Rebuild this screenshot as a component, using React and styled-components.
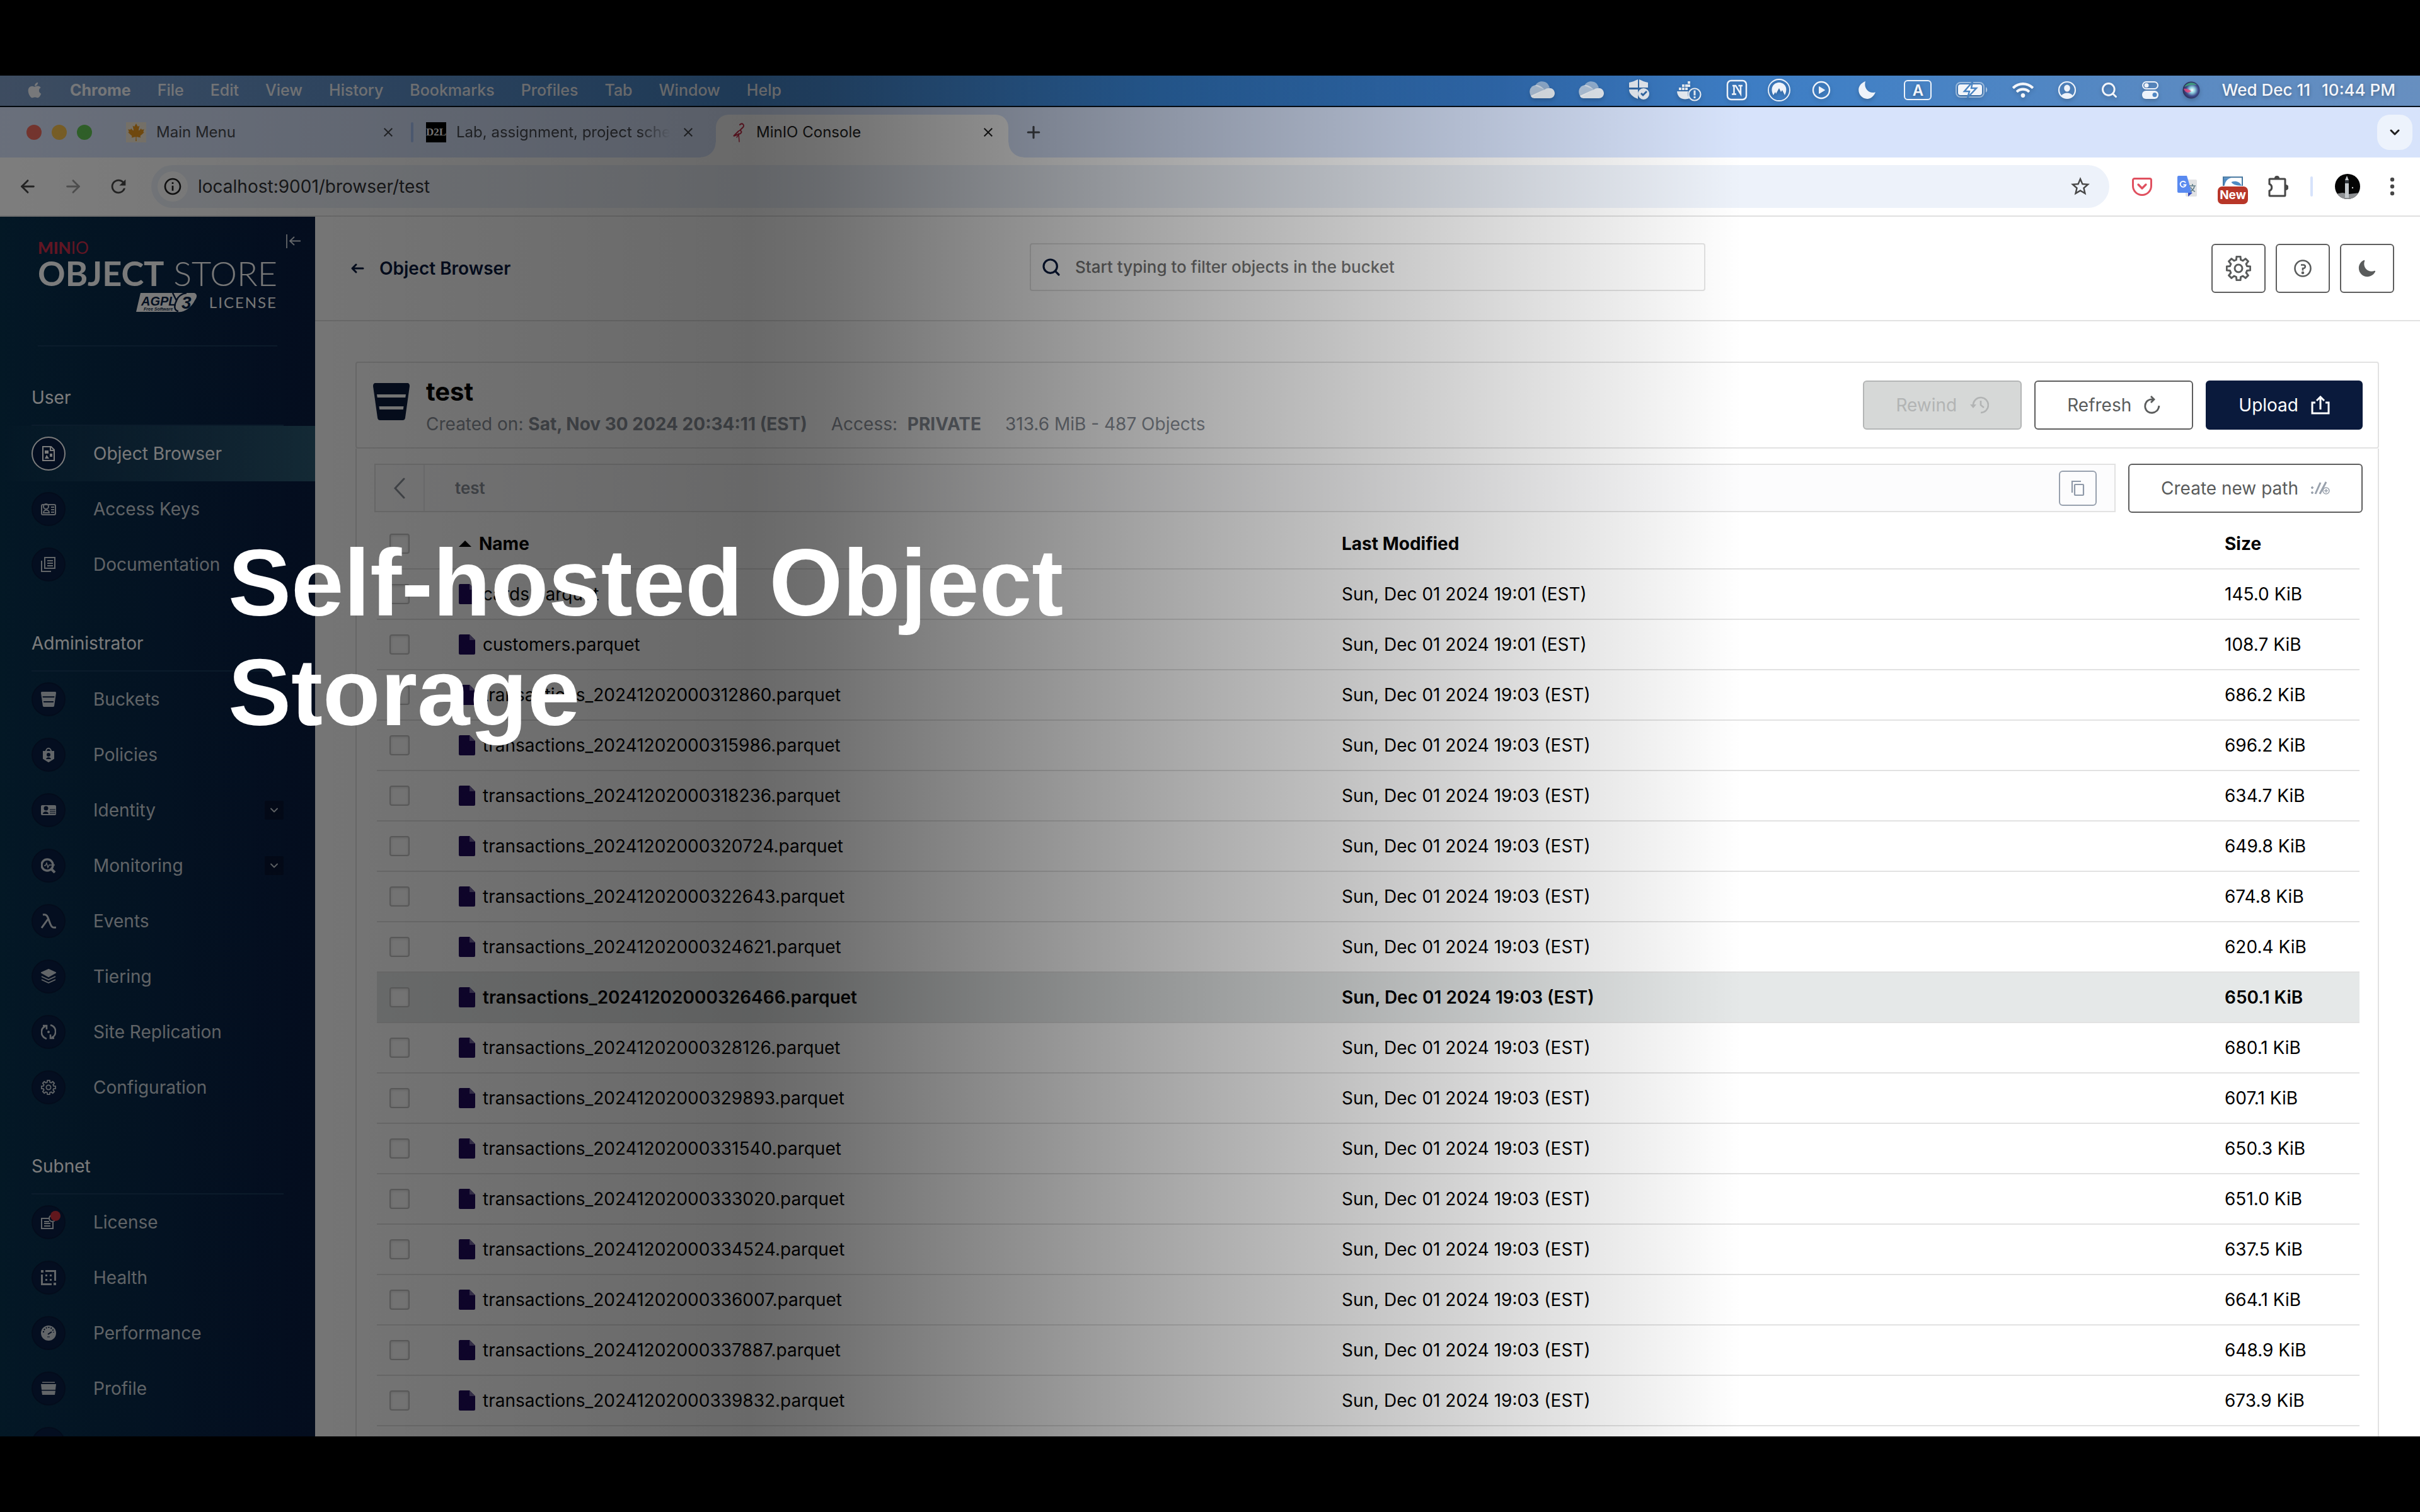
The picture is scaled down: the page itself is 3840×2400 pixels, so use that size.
import React from "react";
import styled, { createGlobalStyle, css } from "styled-components";
import { FaApple, FaCanadianMapleLeaf, FaWifi } from "react-icons/fa";
import { MdStarBorder, MdClose, MdRefresh, MdOutlineInfo } from "react-icons/md";
import { IoMoon } from "react-icons/io5";
import { ArrowLeft, ArrowRight, ChevronDown, Plus, Search } from "lucide-react";

const GlobalStyle = createGlobalStyle`
  *, *::before, *::after { box-sizing: border-box; }
  body {
    margin: 0;
    background: #000;
    font-family: Inter, "Liberation Sans", sans-serif;
    font-size: 28px;
    line-height: 36px;
  }
  button, input { font: inherit; color: inherit; }
  button { border: 0; padding: 0; margin: 0; background: none; }
  a { color: inherit; text-decoration: none; }
  svg { display: block; flex: none; }
`;

/* ---------- Slide frame ---------- */

const Stage = styled.main`
  min-height: 100vh;
  display: flex;
  flex-direction: column;
  justify-content: center;
`;

const Frame = styled.div`
  position: relative;
  width: 100%;
  aspect-ratio: 16 / 9;
  overflow: hidden;
  display: flex;
  flex-direction: column;
  background: #fff;
`;

const Overlay = styled.div`
  position: absolute;
  inset: 0;
  padding: 718px 362px 0;
  pointer-events: none;
  background: linear-gradient(
    90deg,
    rgba(0, 0, 0, 0.51) 0%,
    rgba(0, 0, 0, 0.54) 13%,
    rgba(0, 0, 0, 0.59) 31%,
    rgba(0, 0, 0, 0.56) 34%,
    rgba(0, 0, 0, 0.36) 47%,
    rgba(0, 0, 0, 0.29) 52%,
    rgba(0, 0, 0, 0.09) 66%,
    rgba(0, 0, 0, 0) 72%
  );
`;

const Headline = styled.h1`
  margin: 0;
  max-width: 1500px;
  color: #fff;
  font-family: "Liberation Sans", Arial, sans-serif;
  font-size: 150px;
  line-height: 174px;
  font-weight: 700;
`;

/* ---------- macOS menu bar ---------- */

const MenuBar = styled.header`
  flex: none;
  height: 50px;
  padding: 0 39px 2px 41px;
  display: flex;
  align-items: center;
  justify-content: space-between;
  color: #f4f6fa;
  font-size: 26px;
  border-bottom: 2px solid #05101c;
  background: linear-gradient(90deg, #7d9bc4 0%, #6a97cd 10%, #4a8bd0 30%, #3580d0 48%, #3474bf 62%, #4180c5 76%, #5a8ac2 90%, #678fc0 100%);
  text-shadow: 0 2px 6px rgba(0, 0, 0, 0.3);
`;

const MenuGroup = styled.nav`
  display: flex;
  align-items: center;
  gap: 42px;
  font-size: 25px;
`;

const MenuItem = styled.button`
  font-weight: ${(p) => (p.$strong ? 700 : 500)};
`;

const StatusGroup = styled.div`
  display: flex;
  align-items: center;
  gap: 34px;
`;

const StatusIcons = styled.div`
  display: flex;
  align-items: center;
  gap: 38px;
  svg { overflow: visible; filter: drop-shadow(0 3px 3px rgba(0, 0, 0, 0.2)); }
`;

const Clock = styled.time`
  display: flex;
  gap: 18px;
  font-weight: 500;
`;

/* ---------- Browser chrome ---------- */

const TabStrip = styled.div`
  flex: none;
  height: 80px;
  padding: 12px 12px 0 0;
  display: flex;
  align-items: flex-start;
  background: #d7e3fb;
  color: #474a50;
  font-size: 24px;
`;

const Lights = styled.div`
  width: 188px;
  height: 56px;
  padding-left: 42px;
  display: flex;
  align-items: center;
  gap: 16px;
`;

const Light = styled.span`
  width: 24px;
  height: 24px;
  border-radius: 50%;
  background: ${(p) => p.$color};
`;

const Tab = styled.div`
  position: relative;
  width: ${(p) => p.$width}px;
  height: 56px;
  padding: 0 8px 0 20px;
  display: flex;
  align-items: center;
  gap: 16px;
  ${(p) =>
    p.$divider &&
    css`
      padding: 0 28px 0 12px;
      &::after {
        content: "";
        position: absolute;
        right: 0;
        width: 4px;
        height: 32px;
        border-radius: 2px;
        background: #a8c4f5;
      }
    `}
  ${(p) =>
    p.$active &&
    css`
      height: 68px;
      margin-left: 24px;
      padding: 0 20px 12px 24px;
      color: #1f1f1f;
      background: #fff;
      border-radius: 20px 20px 0 0;
      &::before,
      &::after {
        content: "";
        position: absolute;
        bottom: 0;
        width: 24px;
        height: 24px;
      }
      &::before {
        right: 100%;
        background: radial-gradient(circle at 0 0, transparent 23px, #fff 24px);
      }
      &::after {
        left: 100%;
        background: radial-gradient(circle at 100% 0, transparent 23px, #fff 24px);
      }
    `}
`;

const TabTitle = styled.button`
  flex: 1;
  min-width: 0;
  text-align: left;
  white-space: nowrap;
  overflow: hidden;
  ${(p) =>
    p.$fade &&
    css`
      mask-image: linear-gradient(90deg, #000 85%, transparent 100%);
    `}
`;

const IconButton = styled.button`
  display: flex;
  align-items: center;
  justify-content: center;
  width: ${(p) => p.$size || 32}px;
  height: ${(p) => p.$size || 32}px;
  color: ${(p) => p.$color || "inherit"};
`;

const NewTab = styled(IconButton)`
  width: 80px;
  height: 56px;
  margin-right: auto;
`;

const TabSearch = styled(IconButton)`
  width: 56px;
  height: 56px;
  border-radius: 20px;
  background: #edf3fc;
  color: #1f1f1f;
`;

const Toolbar = styled.div`
  flex: none;
  height: 94px;
  padding: 12px 28px 12px 28px;
  display: flex;
  align-items: center;
  background: #fff;
  border-bottom: 2px solid #e0e0e0;
  color: #474747;
`;

const NavButtons = styled.div`
  width: 212px;
  display: flex;
  gap: 40px;
`;

const AddressBar = styled.label`
  flex: 1;
  height: 68px;
  padding: 0 30px 0 10px;
  display: flex;
  align-items: center;
  gap: 16px;
  border-radius: 34px;
  background: #edf2fa;
`;

const SiteInfo = styled(IconButton)`
  width: 48px;
  height: 48px;
  border-radius: 50%;
  background: #fff;
  color: #1f1f1f;
`;

const AddressInput = styled.input`
  flex: 1;
  border: 0;
  padding: 0;
  outline: 0;
  background: none;
  color: #303134;
  font-size: 28px;
`;

const ToolbarEnd = styled.div`
  padding-left: 36px;
  display: flex;
  align-items: center;
  gap: 35px;
`;

const Extensions = styled.div`
  display: flex;
  align-items: center;
  gap: 40px;
`;

const Separator = styled.span`
  width: 4px;
  height: 32px;
  border-radius: 2px;
  background: #d7e3fb;
`;

const NewExtension = styled.button`
  position: relative;
  display: flex;
  align-items: flex-start;
  width: 32px;
  height: 32px;
`;

const NewBadge = styled.span`
  position: absolute;
  top: 16px;
  left: -8px;
  width: 48px;
  height: 28px;
  border-radius: 7px;
  background: #b83628;
  color: #fff;
  font-size: 19px;
  line-height: 28px;
  font-weight: 700;
  text-align: center;
`;

/* ---------- Console ---------- */

const Console = styled.div`
  flex: 1;
  min-height: 0;
  display: flex;
`;

const Sidebar = styled.aside`
  width: 500px;
  flex: none;
  background: linear-gradient(90deg, #07304c 0%, #081c42 100%);
  color: #fff;
`;

const Brand = styled.div`
  position: relative;
  height: 206px;
  margin: 0 60px;
  padding-top: 38px;
  border-bottom: 2px solid #17395a;
  font-family: Lato, "Open Sans", sans-serif;
`;

const BrandName = styled.div`
  height: 22px;
  color: #c72c48;
  font-size: 26px;
  line-height: 22px;
  font-weight: 900;
  span { font-weight: 400; }
`;

const ProductName = styled.div`
  height: 60px;
  display: flex;
  justify-content: space-between;
  font-size: 54px;
  line-height: 60px;
  font-weight: 300;
  white-space: nowrap;
  b { font-weight: 700; }
`;

const LicenseLine = styled.div`
  display: flex;
  justify-content: flex-end;
  align-items: center;
  gap: 18px;
  font-size: 24px;
  line-height: 32px;
  letter-spacing: 2px;
`;

const CollapseButton = styled.button`
  position: absolute;
  top: 28px;
  right: -38px;
  color: #d8dde4;
`;

const NavHeading = styled.h2`
  margin: 0 50px;
  height: 126px;
  padding-top: 63px;
  border-bottom: 2px solid #17395a;
  font-size: 28px;
  line-height: 36px;
  font-weight: 400;
`;

const NavList = styled.ul`
  margin: 0;
  padding: 0;
  list-style: none;
`;

const NavRow = styled.li`
  height: 88px;
  padding: 0 50px;
  display: flex;
  align-items: center;
  justify-content: space-between;
  color: ${(p) => (p.$active ? "#fff" : "#c9d0d6")};
  background: ${(p) => (p.$active ? "linear-gradient(90deg, rgba(43, 92, 120, 0) 0%, #2a5a73 100%)" : "none")};
`;

const NavLink = styled.a`
  display: flex;
  align-items: center;
  gap: 44px;
`;

const NavIcon = styled.span`
  position: relative;
  width: 54px;
  height: 54px;
  display: flex;
  align-items: center;
  justify-content: center;
  border-radius: 50%;
  border: 2px solid ${(p) => (p.$active ? "#fff" : "#071838")};
  background: #081c42;
`;

const NavDot = styled.i`
  position: absolute;
  top: 7px;
  right: 6px;
  width: 16px;
  height: 16px;
  border-radius: 50%;
  background: #c8303c;
`;

const Expander = styled(IconButton)`
  width: 30px;
  height: 30px;
  border-radius: 2px;
  background: #071431;
`;

const Content = styled.div`
  flex: 1;
  min-width: 0;
  background: #fff;
`;

const PageHeader = styled.div`
  height: 166px;
  padding: 0 41px 0 56px;
  display: grid;
  grid-template-columns: 1078px 1072px 1fr;
  align-items: center;
  border-bottom: 2px solid #e2e2e2;
`;

const BackLink = styled.a`
  display: flex;
  align-items: center;
  gap: 24px;
  color: #07193e;
  font-weight: 600;
`;

const SearchBox = styled.label`
  height: 76px;
  margin-bottom: 4px;
  padding: 0 16px;
  display: flex;
  align-items: center;
  gap: 22px;
  border: 2px solid #e2e2e2;
  border-radius: 4px;
  color: #07193e;
`;

const SearchInput = styled.input`
  flex: 1;
  padding: 0;
  border: 0;
  outline: 0;
  background: none;
  font-size: 26px;
  font-weight: 500;
  &::placeholder { color: #747474; opacity: 1; }
`;

const HeaderActions = styled.div`
  display: flex;
  justify-content: flex-end;
  gap: 16px;
`;

const SquareButton = styled.button`
  width: 86px;
  height: 78px;
  display: flex;
  align-items: center;
  justify-content: center;
  border: 2px solid #5e5e5e;
  border-radius: 6px;
  color: #5a5c5c;
`;

const Page = styled.section`
  padding: 64px 65px 0 64px;
`;

const BucketHeader = styled.div`
  height: 138px;
  padding: 0 24px 0 26px;
  display: flex;
  align-items: center;
  border: 2px solid #e2e2e2;
  border-radius: 4px;
`;

const BucketMark = styled.span`
  align-self: flex-start;
  padding-top: 32px;
  color: #0a1a3c;
`;

const BucketInfo = styled.div`
  flex: 1;
  padding-left: 26px;
`;

const BucketName = styled.h2`
  margin: 0;
  font-size: 40px;
  line-height: 60px;
  font-weight: 700;
  color: #000;
`;

const BucketMeta = styled.p`
  margin: 0;
  display: flex;
  gap: 38px;
  color: #8a9099;
  line-height: 42px;
  white-space: pre;
  b { font-weight: 700; }
`;

const Actions = styled.div`
  display: flex;
  gap: 20px;
`;

const Button = styled.button`
  height: 78px;
  padding: 0 50px;
  display: flex;
  align-items: center;
  gap: 20px;
  border: 2px solid #5e5e5e;
  border-radius: 6px;
  color: #5a5c5c;
  white-space: nowrap;
  ${(p) =>
    p.$primary &&
    css`
      color: #fff;
      border-color: #0a1a3c;
      background: #0a1a3c;
    `}
  &:disabled {
    color: #b2b4b4;
    border-color: #b4b6b6;
    background: #d6d8d7;
  }
`;

const Browser = styled.div`
  padding: 24px 24px 40px 28px;
  border: solid #e2e2e2;
  border-width: 0 2px;
`;

const PathRow = styled.div`
  display: flex;
  gap: 20px;
`;

const PathBar = styled.nav`
  flex: 1;
  height: 77px;
  padding-right: 28px;
  display: flex;
  align-items: center;
  border: 2px solid #e2e2e2;
  background: #fcfcfd;
  color: #8a9099;
  font-size: 26px;
  font-weight: 600;
`;

const PathBack = styled(IconButton)`
  width: 78px;
  height: 73px;
  border-right: 2px solid #e8e8ea;
  margin-right: 48px;
`;

const CopyButton = styled(IconButton)`
  width: 60px;
  height: 56px;
  margin-left: auto;
  border: 2px solid #98a1ae;
  border-radius: 6px;
  color: #8f99a8;
`;

const ObjectTable = styled.table`
  width: calc(100% - 9px);
  margin: 10px 5px 0 4px;
  table-layout: fixed;
  border-collapse: separate;
  border-spacing: 0;
  color: #000;
  text-align: left;
`;

const SelectColumn = styled.col`
  width: 130px;
`;

const SizeColumn = styled.col`
  width: 214px;
`;

const Cell = styled.td`
  height: 80px;
  padding: 0 0 0 ${(p) => (p.$select ? 20 : 0)}px;
  border-bottom: 2px solid #e2e2e2;
`;

const Row = styled.tr`
  font-weight: ${(p) => (p.$hover ? 600 : 400)};
  background: ${(p) => (p.$hover ? "#e5e8e8" : "none")};
`;

const HeadCell = styled(Cell)`
  font-weight: 700;
`;

const CellInner = styled.div`
  display: flex;
  align-items: center;
  gap: 12px;
`;

const Checkbox = styled.input.attrs({ type: "checkbox" })`
  appearance: none;
  display: block;
  width: 32px;
  height: 32px;
  margin: 0;
  border: 2px solid #c3c3c3;
  border-radius: 4px;
  background: #fff;
  box-shadow: inset 0 1px 4px rgba(0, 0, 0, 0.15);
`;

/* ---------- Icons ---------- */

const Cloud = () => (
  <svg width="40" height="28" viewBox="0 0 40 28" fill="#fff">
    <path opacity=".5" d="M9 7C12 1 18-1 24 1c4 1 6 4 8 9l-8 3z" />
    <path opacity=".65" d="M2 23C-2 16 1 7 10 6c5-.5 8 2 14 7L4 25z" />
    <path opacity=".9" d="M2 23l22-10c8-5 16-1 16 6 0 5-4 8-8 8H9c-4 0-6-1-7-4z" />
  </svg>
);

const Shield = () => (
  <svg width="36" height="36" viewBox="0 0 36 36" fill="#e9eef5">
    <path d="M2 6C8 5 11 3 16 1v13H2zM18 1c5 2 8 4 14 5v8H18zM2 17h14v15C8 29 2 24 2 17z" />
    <path fillRule="evenodd" d="M25 15a9 9 0 100 18 9 9 0 000-18zm-5 9l2-2 2 2 5-5 2 2-7 7z" />
  </svg>
);

const Docker = () => (
  <svg width="46" height="34" viewBox="0 0 46 34" fill="#e9eef5">
    <path d="M21 3h4v4h-4zM12 8h4v4h-4zM17 8h4v4h-4zM21 8h4v4h-4zM7 13h4v4H7zM12 13h4v4h-4zM17 13h4v4h-4zM4 19h18c-2 4-1 8 2 11-7 3-19 2-20-11z" />
    <circle cx="32" cy="24" r="9.500" fill="none" stroke="#e9eef5" strokeWidth="2.200" />
    <path d="M30.500 17.500h3v8h-3zM30.500 27h3v3h-3z" />
  </svg>
);

const Notion = () => (
  <svg width="30" height="32" viewBox="0 0 30 32" fill="none" stroke="#eef3fa">
    <rect x="0" y="1" width="30" height="30" rx="6" strokeWidth="2.500" />
    <path d="M8 9h5l8 13V9M17.500 9H24M10.500 9.500V22M7 22.500h7" strokeWidth="2.500" />
  </svg>
);

const Peaks = () => (
  <svg width="28" height="36" viewBox="0 0 28 36">
    <circle cx="14" cy="18" r="17" fill="none" stroke="#eef3fa" strokeWidth="1.800" />
    <path d="M5 26C-1 15 5 6 14 6s15 9 9 20l-4-8-2 3-3-6-5 9-1-3z" fill="#eef3fa" />
  </svg>
);

const Play = () => (
  <svg width="30" height="30" viewBox="0 0 30 30">
    <circle cx="15" cy="15" r="13" fill="none" stroke="#eef3fa" strokeWidth="2.400" />
    <path d="M11.500 9.500v11l9-5.500z" fill="#eef3fa" stroke="#eef3fa" strokeLinejoin="round" />
  </svg>
);

const MenuMoon = () => (
  <svg width="40" height="28" viewBox="0 0 40 28" fill="#eef3fa">
    <path d="M17 0c-3 10 4 20 16 17.500C30 24 25 28 20 28 6 28-1 7 17 0z" />
  </svg>
);

const InputSourceBox = styled.span`
  width: 44px;
  height: 32px;
  border: 2px solid #eef3fa;
  border-radius: 6px;
  font-weight: 600;
  font-size: 24px;
  line-height: 29px;
  text-align: center;
`;

const Battery = () => (
  <svg width="52" height="26" viewBox="0 0 52 26">
    <rect x="1" y="1" width="44" height="23" rx="7" fill="none" stroke="#eef3fa" strokeOpacity=".5" strokeWidth="2" />
    <rect x="4" y="4" width="38" height="17" rx="4" fill="#f2f5fa" />
    <path d="M48 8c3 2 3 7 0 9z" fill="#eef3fa" opacity=".6" />
    <path d="M27 0L14 15h8l-3 10L33 10h-8z" fill="#fff" stroke="#4a84c3" strokeWidth="2.500" />
  </svg>
);

const UserCircle = () => (
  <svg width="30" height="30" viewBox="0 0 30 30" fill="#eef3fa">
    <circle cx="15" cy="15" r="13" fill="none" stroke="#eef3fa" strokeWidth="2.200" />
    <ellipse cx="15" cy="12" rx="4.800" ry="5.600" />
    <path d="M6 24c3-6 15-6 18 0-5 5-13 5-18 0z" />
  </svg>
);

const Toggles = () => (
  <svg width="26" height="28" viewBox="0 0 26 28">
    <rect x="1" y="1" width="24" height="11" rx="5.500" fill="none" stroke="#eef3fa" strokeWidth="2" />
    <circle cx="7" cy="6.500" r="3.500" fill="#eef3fa" />
    <rect y="15" width="26" height="13" rx="6" fill="#eef3fa" />
    <circle cx="20" cy="21.500" r="3.500" fill="#4f86c3" />
  </svg>
);

const Assistant = () => (
  <svg width="28" height="28" viewBox="0 0 28 28">
    <defs>
      <radialGradient id="orb" cx=".55" cy=".5" r=".55">
        <stop offset="0" stopColor="#fff" />
        <stop offset=".3" stopColor="#8fd0e0" />
        <stop offset=".65" stopColor="#3d4a8c" />
        <stop offset="1" stopColor="#2b2c50" />
      </radialGradient>
    </defs>
    <circle cx="14" cy="14" r="13.500" fill="url(#orb)" />
    <path d="M3 9C7 1 18 0 23 6c-8-1-14 0-20 3z" fill="#3fae7c" opacity=".8" />
    <path d="M2 12c5-1 9 1 12 4-5 3-9 3-12-4z" fill="#e0487c" opacity=".85" />
  </svg>
);

const BrandD2L = styled.span`
  width: 32px;
  height: 32px;
  background: #000;
  color: #fff;
  font: 700 17px/32px "Liberation Serif", serif;
  text-align: center;
  overflow: hidden;
  flex: none;
`;

const MapleTile = styled.span`
  width: 32px;
  height: 32px;
  flex: none;
  display: flex;
  align-items: center;
  justify-content: center;
  background: #f4ead8;
  color: #e8971e;
`;

const Flamingo = () => (
  <svg width="24" height="32" viewBox="0 0 24 32" fill="none" stroke="#c72e49" strokeLinecap="round">
    <path d="M14 4c4-4 8 1 5 4l-5 5c4 1 3 5-2 6l-8 3 8-8" strokeWidth="2" />
    <path d="M12 18l1 13M12 20l-3 4" strokeWidth="1.500" />
  </svg>
);

const Pocket = () => (
  <svg width="32" height="32" viewBox="0 0 32 32" fill="none" stroke="#e0505f" strokeLinecap="round">
    <path d="M4 3.500h24a2.500 2.500 0 012.500 2.500v9a14.500 14.500 0 01-29 0V6A2.500 2.500 0 014 3.500z" strokeWidth="3" />
    <path d="M10 13l6 6 6-6" strokeWidth="3.200" strokeLinejoin="round" />
  </svg>
);

const Translate = () => (
  <svg width="32" height="34" viewBox="0 0 32 34">
    <rect x="13" y="6" width="18" height="27" rx="2" fill="#e1e2e4" />
    <path d="M17 27h7l-7 6z" fill="#3b50c0" />
    <path d="M2 0h13l8 27H2a2 2 0 01-2-2V2a2 2 0 012-2z" fill="#598af0" />
    <path d="M13 11a4.500 4.500 0 10.500 3.500H9.500" fill="none" stroke="#fff" strokeWidth="1.800" />
    <path d="M19 16h10M24 13v3M27 17c-1 4-3 6-6 8M21 18c2 4 4 6 7 7" fill="none" stroke="#607d88" strokeWidth="1.600" />
  </svg>
);

const Swoosh = () => (
  <svg width="32" height="15" viewBox="0 0 33 15">
    <rect x="1" y="1" width="31" height="18" fill="#fff" stroke="#42749e" strokeWidth="2" />
    <path d="M2 2h12C7 4 4 8 3 15H2zM14 9c6-3 14-1 17 6-6 0-14-1-17-6z" fill="#4f8cc4" />
  </svg>
);

const Puzzle = () => (
  <svg width="32" height="34" viewBox="0 0 32 34">
    <path d="M3 5h23a1 1 0 011 1v25a1 1 0 01-1 1H3a1 1 0 01-1-1v-7c5-2 5-9 0-11V6a1 1 0 011-1z" fill="none" stroke="#474747" strokeWidth="3" />
    <path d="M10 4a4 4 0 018 0zM28 14a4 4 0 010 9z" fill="#474747" />
  </svg>
);

const Avatar = () => (
  <svg width="40" height="40" viewBox="0 0 40 40">
    <clipPath id="avatar-clip"><circle cx="20" cy="20" r="20" /></clipPath>
    <g clipPath="url(#avatar-clip)">
      <rect width="40" height="40" fill="#050505" />
      <path d="M0 32l12-2 10 2 18-2v10H0z" fill="#8d8f92" />
      <path d="M16 10l3-7 3 7v28h-6z" fill="#c3c7cb" />
      <path d="M16 10h6v5h-6z" fill="#33383e" />
      <circle cx="28" cy="22" r="1.200" fill="#ccc" />
    </g>
  </svg>
);

const Dots = () => (
  <svg width="8" height="32" viewBox="0 0 8 32" fill="#474747">
    <circle cx="4" cy="5" r="3.200" />
    <circle cx="4" cy="16" r="3.200" />
    <circle cx="4" cy="27" r="3.200" />
  </svg>
);

const gearPath = (() => {
  const points = [];
  for (let i = 0; i < 8; i += 1) {
    const a = (i * Math.PI) / 4;
    [[-0.26, 14], [-0.16, 19], [0.16, 19], [0.26, 14]].forEach(([d, r]) => {
      points.push(`${(20 + r * Math.sin(a + d)).toFixed(2)} ${(20 - r * Math.cos(a + d)).toFixed(2)}`);
    });
  }
  return `M${points.join("L")}Z`;
})();

const Gear = ({ size = 40 }) => (
  <svg width={size} height={size} viewBox="0 0 40 40" fill="none" stroke="currentColor" strokeWidth="3" strokeLinejoin="round">
    <path d={gearPath} />
    <circle cx="20" cy="20" r="6" />
  </svg>
);

const Help = () => (
  <svg width="28" height="30" viewBox="0 0 28 30" fill="none" stroke="currentColor" strokeWidth="2.600">
    <circle cx="14" cy="15" r="12.500" />
    <path d="M11 9.500h4c4 0 4 5.500-1 5.500v3.500" />
    <circle cx="14" cy="22" r="1" />
  </svg>
);

const Bucket = ({ width = 58, height = 59, line = "#fff" }) => (
  <svg width={width} height={height} viewBox="0 0 58 59" preserveAspectRatio="none" fill="currentColor">
    <path d="M4 0h50c3 0 4 2 4 5l-7 50c-.5 3-2 4-4 4H11c-2 0-3.500-1-4-4L0 5c0-3 1-5 4-5z" />
    <path d="M6 18h46l-.7 5H6.700zM9.500 37h39l-.7 5H10.200z" fill={line} />
  </svg>
);

const BackArrow = () => (
  <svg width="22" height="18" viewBox="0 0 22 18" fill="none" stroke="currentColor" strokeWidth="3" strokeLinecap="round" strokeLinejoin="round">
    <path d="M20 9H3M9 3L3 9l6 6" />
  </svg>
);

const Rewind = () => (
  <svg width="31" height="30" viewBox="0 0 31 30" fill="none" stroke="currentColor" strokeWidth="2.600">
    <path d="M6 17V14A12 12 0 1118 27M18 8v7l5 4" />
    <path d="M1 14l5 6 5-6z" fill="currentColor" stroke="none" />
  </svg>
);

const Reload = () => (
  <svg width="26" height="30" viewBox="0 0 26 30" fill="none" stroke="currentColor" strokeWidth="2.800">
    <path d="M15 6C4 5 1 13 2 19c2 11 20 12 22-3M11 1l5 5-5 5" />
  </svg>
);

const Upload = () => (
  <svg width="30" height="30" viewBox="0 0 30 30" fill="none" stroke="currentColor" strokeWidth="3">
    <path d="M7 11H2v17h26V11h-5M15 22V3M9 8l6-6 6 6" />
  </svg>
);

const Copy = () => (
  <svg width="22" height="26" viewBox="0 0 22 26" fill="none" stroke="currentColor" strokeWidth="2.200">
    <path d="M2 20V2h14" />
    <rect x="6" y="7" width="14" height="17" rx="1" />
  </svg>
);

const NewPath = () => (
  <svg width="30" height="22" viewBox="0 0 30 22" fill="none" stroke="#9aa2ad">
    <path d="M7 20L15 2M14 20L24 1" strokeWidth="3" />
    <circle cx="2" cy="10" r="1.500" fill="#9aa2ad" />
    <circle cx="2" cy="18" r="1.500" fill="#9aa2ad" />
    <circle cx="24" cy="15" r="5" strokeWidth="1.500" />
    <path d="M24 12v6M21 15h6" strokeWidth="1.500" />
  </svg>
);

const FileIcon = () => (
  <svg width="26" height="32" viewBox="0 0 26 32">
    <path d="M2 0h15l9 9v21a2 2 0 01-2 2H2a2 2 0 01-2-2V2a2 2 0 012-2z" fill="#1f0a5c" />
    <path d="M17 0l9 9h-9z" fill="#7466a0" />
  </svg>
);

const SortUp = () => (
  <svg width="20" height="10" viewBox="0 0 20 10"><path d="M0 10L10 0l10 10z" /></svg>
);

const AgplBadge = () => (
  <svg width="98" height="32" viewBox="0 0 98 32">
    <path d="M7 1h82c8-1 9 6 4 12-6 12-18 20-28 18H0z" fill="#fff" />
    <path d="M58 1l6 12c2-6 8-11 16-12M64 13c-4 8-4 16 3 17" stroke="#081f45" strokeWidth="2.500" fill="none" />
    <text x="8" y="21" fontFamily="Liberation Sans" fontWeight="700" fontStyle="italic" fontSize="20" letterSpacing="0" fill="#081f45">AGPL</text>
    <text x="12" y="29" fontFamily="Liberation Sans" fontWeight="700" fontStyle="italic" fontSize="7" letterSpacing="0" fill="#081f45">Free Software</text>
    <text x="72" y="26" fontFamily="Liberation Sans" fontWeight="700" fontStyle="italic" fontSize="28" letterSpacing="0" fill="#081f45">3</text>
  </svg>
);

const NI = ({ children }) => (
  <svg width="24" height="24" viewBox="0 0 24 24" fill="none" stroke="currentColor" strokeWidth="2">{children}</svg>
);

const navIcons = {
  object: <NI><path d="M3 1h13l5 5v17H3zM15 1v6h6" /><path d="M6 7h6v5H6zM9 14l4 6H6zM14 12h4v5h-4z" fill="currentColor" stroke="none" /></NI>,
  keys: <NI><rect x="1" y="5" width="22" height="16" rx="2" /><circle cx="8" cy="8" r="4" /><path d="M4 18c0-6 9-6 9 0z" /><path d="M16 9h5M16 13h5M16 17h5" /></NI>,
  docs: <NI><path d="M6 1h16v17H6zM10 6h9M10 10h9M10 14h9M1 6v17h15" /></NI>,
  policies: <NI><path d="M4 7h16v11l-8 5-8-5z" fill="currentColor" /><path d="M8 7c0-7 8-7 8 0" /><circle cx="12" cy="12" r="3" fill="#081c42" stroke="none" /><path d="M8 19c1-4 7-4 8 0z" fill="#081c42" stroke="none" /></NI>,
  identity: <NI><rect x="0" y="4" width="24" height="16" rx="2" fill="currentColor" stroke="none" /><circle cx="8" cy="9" r="3.500" fill="#081c42" stroke="none" /><path d="M3 18c0-5 9-5 9 0z" fill="#081c42" stroke="none" /><path d="M14 11h9M14 14h9M14 17h9" stroke="#081c42" strokeWidth="1.200" /></NI>,
  monitoring: <NI><circle cx="10" cy="11" r="9" strokeWidth="3.500" /><path d="M5 12h2l2-4 2 7 2-4h9" strokeWidth="1.500" /><path d="M16 17l6 6" strokeWidth="4" /></NI>,
  events: <NI><path d="M3 2c8-2 8 6 12 15 2 5 4 6 9 5M11 9L1 23" strokeWidth="3" /></NI>,
  tiering: <NI><path d="M12 1l11 5-11 6L1 6z" fill="currentColor" /><path d="M1 12l11 5 11-5M1 17l11 5 11-5" strokeWidth="1.800" /></NI>,
  replication: <NI><path d="M9 23C-2 19-1 6 7 3M3 2h6v6M15 1c11 3 10 17 2 20M21 22h-6v-6" strokeWidth="2.600" /><circle cx="12" cy="12" r="1" fill="currentColor" /></NI>,
  license: <NI><path d="M14 6H1v16h18V12M5 11h8M5 14h10M5 18h10" /><circle cx="18" cy="6" r="5" /></NI>,
  health: <NI><path d="M7 1.500h15.500V17M1.500 7v15.500H17" strokeWidth="3" /><path d="M0 0h4v4H0zM20 20h4v4h-4zM7 7h3v3H7zM14 7h3v3h-3zM7 14h3v3H7zM14 14h3v3h-3z" fill="currentColor" stroke="none" /></NI>,
  performance: <NI><circle cx="12" cy="12" r="12" fill="currentColor" stroke="none" /><path d="M4 11a8 8 0 0116 0" stroke="#081c42" strokeDasharray="2 2" /><path d="M11 14l6-4" stroke="#081c42" /><path d="M10 18h4" stroke="#081c42" strokeWidth="1" /></NI>,
  profile: <NI><path d="M2 1.500h20v1.500H2zM0 5h24l-1 9H1zM1 15.500h22l-1 6.500H2z" fill="currentColor" stroke="none" /></NI>,
};

/* ---------- Data ---------- */

const menuItems = ["File", "Edit", "View", "History", "Bookmarks", "Profiles", "Tab", "Window", "Help"];

const sections = [
  { title: "User", items: [["Object Browser", "object"], ["Access Keys", "keys"], ["Documentation", "docs"]] },
  {
    title: "Administrator",
    items: [["Buckets", "bucket"], ["Policies", "policies"], ["Identity", "identity"], ["Monitoring", "monitoring"], ["Events", "events"], ["Tiering", "tiering"], ["Site Replication", "replication"], ["Configuration", "gear"]],
  },
  { title: "Subnet", items: [["License", "license"], ["Health", "health"], ["Performance", "performance"], ["Profile", "profile"], ["", "none"]] },
];

const objects = [
  ["cards.parquet", "19:01", "145.0 KiB"],
  ["customers.parquet", "19:01", "108.7 KiB"],
  ["transactions_20241202000312860.parquet", "19:03", "686.2 KiB"],
  ["transactions_20241202000315986.parquet", "19:03", "696.2 KiB"],
  ["transactions_20241202000318236.parquet", "19:03", "634.7 KiB"],
  ["transactions_20241202000320724.parquet", "19:03", "649.8 KiB"],
  ["transactions_20241202000322643.parquet", "19:03", "674.8 KiB"],
  ["transactions_20241202000324621.parquet", "19:03", "620.4 KiB"],
  ["transactions_20241202000326466.parquet", "19:03", "650.1 KiB"],
  ["transactions_20241202000328126.parquet", "19:03", "680.1 KiB"],
  ["transactions_20241202000329893.parquet", "19:03", "607.1 KiB"],
  ["transactions_20241202000331540.parquet", "19:03", "650.3 KiB"],
  ["transactions_20241202000333020.parquet", "19:03", "651.0 KiB"],
  ["transactions_20241202000334524.parquet", "19:03", "637.5 KiB"],
  ["transactions_20241202000336007.parquet", "19:03", "664.1 KiB"],
  ["transactions_20241202000337887.parquet", "19:03", "648.9 KiB"],
  ["transactions_20241202000339832.parquet", "19:03", "673.9 KiB"],
];

const expandable = ["Identity", "Monitoring"];

function navIcon(name) {
  if (name === "bucket") return <Bucket width={24} height={24} line="#081c42" />;
  if (name === "gear") return <Gear size={24} />;
  return navIcons[name];
}

function SystemMenu() {
  return (
    <MenuBar>
      <MenuGroup aria-label="Application menu">
        <FaApple size={28} />
        <MenuItem $strong>Chrome</MenuItem>
        {menuItems.map((m) => <MenuItem key={m}>{m}</MenuItem>)}
      </MenuGroup>
      <StatusGroup>
        <StatusIcons>
          <Cloud /><Cloud /><Shield /><Docker /><Notion /><Peaks /><Play /><MenuMoon />
          <InputSourceBox>A</InputSourceBox>
          <Battery />
          <FaWifi size={34} />
          <UserCircle />
          <Search size={28} strokeWidth={2.5} />
          <Toggles />
          <Assistant />
        </StatusIcons>
        <Clock><span>Wed Dec 11</span><span>10:44 PM</span></Clock>
      </StatusGroup>
    </MenuBar>
  );
}

function BrowserChrome() {
  return (
    <>
      <TabStrip>
        <Lights><Light $color="#ec6b5f" /><Light $color="#f4bf4f" /><Light $color="#61c454" /></Lights>
        <Tab $width={468} $divider>
          <MapleTile><FaCanadianMapleLeaf size={28} /></MapleTile>
          <TabTitle>Main Menu</TabTitle>
          <IconButton $size={24} aria-label="Close tab"><MdClose size={24} /></IconButton>
        </Tab>
        <Tab $width={456}>
          <BrandD2L>D2L</BrandD2L>
          <TabTitle $fade>Lab, assignment, project schedule</TabTitle>
          <IconButton $size={24} aria-label="Close tab"><MdClose size={24} /></IconButton>
        </Tab>
        <Tab $width={464} $active>
          <Flamingo />
          <TabTitle>MinIO Console</TabTitle>
          <IconButton $size={24} aria-label="Close tab"><MdClose size={24} /></IconButton>
        </Tab>
        <NewTab aria-label="New tab"><Plus size={30} strokeWidth={2.5} /></NewTab>
        <TabSearch aria-label="Search tabs"><ChevronDown size={24} strokeWidth={3} /></TabSearch>
      </TabStrip>
      <Toolbar>
        <NavButtons>
          <IconButton aria-label="Back"><ArrowLeft size={32} strokeWidth={2.2} /></IconButton>
          <IconButton aria-label="Forward" $color="#a0a0a0"><ArrowRight size={32} strokeWidth={2.2} /></IconButton>
          <IconButton aria-label="Reload"><MdRefresh size={34} /></IconButton>
        </NavButtons>
        <AddressBar>
          <SiteInfo aria-label="Site information"><MdOutlineInfo size={32} /></SiteInfo>
          <AddressInput aria-label="Address" defaultValue="localhost:9001/browser/test" />
          <IconButton aria-label="Bookmark"><MdStarBorder size={36} /></IconButton>
        </AddressBar>
        <ToolbarEnd>
          <Extensions>
            <IconButton aria-label="Pocket"><Pocket /></IconButton>
            <IconButton aria-label="Translate"><Translate /></IconButton>
            <NewExtension><Swoosh /><NewBadge>New</NewBadge></NewExtension>
            <IconButton aria-label="Extensions"><Puzzle /></IconButton>
          </Extensions>
          <Separator />
          <IconButton $size={40} aria-label="Profile"><Avatar /></IconButton>
          <IconButton aria-label="Menu"><Dots /></IconButton>
        </ToolbarEnd>
      </Toolbar>
    </>
  );
}

function SideNav() {
  return (
    <Sidebar>
      <Brand>
        <CollapseButton aria-label="Collapse menu">
          <svg width="24" height="22" viewBox="0 0 24 22" fill="none" stroke="currentColor" strokeWidth="1.800"><path d="M1 0v22M23 10.500H6M13 4l-7 6.500 7 6.500" /></svg>
        </CollapseButton>
        <BrandName>MIN<span>IO</span></BrandName>
        <ProductName><b>OBJECT</b>STORE</ProductName>
        <LicenseLine><AgplBadge />LICENSE</LicenseLine>
      </Brand>
      {sections.map((s) => (
        <nav key={s.title} aria-label={s.title}>
          <NavHeading>{s.title}</NavHeading>
          <NavList>
            {s.items.map(([label, icon]) => {
              const active = label === "Object Browser";
              return (
                <NavRow key={icon} $active={active}>
                  <NavLink href="#">
                    <NavIcon $active={active}>
                      {navIcon(icon)}
                      {label === "License" && <NavDot />}
                    </NavIcon>
                    {label}
                  </NavLink>
                  {expandable.includes(label) && (
                    <Expander aria-label={`Expand ${label}`}><ChevronDown size={20} strokeWidth={2.2} /></Expander>
                  )}
                </NavRow>
              );
            })}
          </NavList>
        </nav>
      ))}
    </Sidebar>
  );
}

function ObjectList() {
  return (
    <ObjectTable>
      <colgroup><SelectColumn /><col /><col /><SizeColumn /></colgroup>
      <thead>
        <tr>
          <HeadCell as="th" $select><Checkbox aria-label="Select all" /></HeadCell>
          <HeadCell as="th"><CellInner><SortUp />Name</CellInner></HeadCell>
          <HeadCell as="th">Last Modified</HeadCell>
          <HeadCell as="th">Size</HeadCell>
        </tr>
      </thead>
      <tbody>
        {objects.map(([name, time, size], i) => (
          <Row key={name} $hover={i === 8}>
            <Cell $select><Checkbox aria-label={`Select ${name}`} /></Cell>
            <Cell><CellInner><FileIcon />{name}</CellInner></Cell>
            <Cell>Sun, Dec 01 2024 {time} (EST)</Cell>
            <Cell>{size}</Cell>
          </Row>
        ))}
      </tbody>
    </ObjectTable>
  );
}

export default function App() {
  return (
    <Stage>
      <GlobalStyle />
      <Frame>
        <SystemMenu />
        <BrowserChrome />
        <Console>
          <SideNav />
          <Content>
            <PageHeader>
              <BackLink href="#"><BackArrow />Object Browser</BackLink>
              <SearchBox>
                <Search size={32} strokeWidth={2.4} />
                <SearchInput aria-label="Filter objects" placeholder="Start typing to filter objects in the bucket" />
              </SearchBox>
              <HeaderActions>
                <SquareButton aria-label="Settings"><Gear /></SquareButton>
                <SquareButton aria-label="Help"><Help /></SquareButton>
                <SquareButton aria-label="Dark mode"><IoMoon size={30} /></SquareButton>
              </HeaderActions>
            </PageHeader>
            <Page>
              <BucketHeader>
                <BucketMark><Bucket /></BucketMark>
                <BucketInfo>
                  <BucketName>test</BucketName>
                  <BucketMeta>
                    <span>Created on: <b>Sat, Nov 30 2024 20:34:11 (EST)</b></span>
                    <span>Access:  <b>PRIVATE</b></span>
                    <span>313.6 MiB - 487 Objects</span>
                  </BucketMeta>
                </BucketInfo>
                <Actions>
                  <Button disabled>Rewind<Rewind /></Button>
                  <Button>Refresh<Reload /></Button>
                  <Button $primary>Upload<Upload /></Button>
                </Actions>
              </BucketHeader>
              <Browser>
                <PathRow>
                  <PathBar aria-label="Path">
                    <PathBack aria-label="Up one level">
                      <svg width="18" height="34" viewBox="0 0 18 34" fill="none" stroke="currentColor" strokeWidth="3" strokeLinecap="round"><path d="M16 2L2 17l14 15" /></svg>
                    </PathBack>
                    <a href="#">test</a>
                    <CopyButton aria-label="Copy path"><Copy /></CopyButton>
                  </PathBar>
                  <Button>Create new path<NewPath /></Button>
                </PathRow>
                <ObjectList />
              </Browser>
            </Page>
          </Content>
        </Console>
        <Overlay><Headline>Self-hosted Object Storage</Headline></Overlay>
      </Frame>
    </Stage>
  );
}
